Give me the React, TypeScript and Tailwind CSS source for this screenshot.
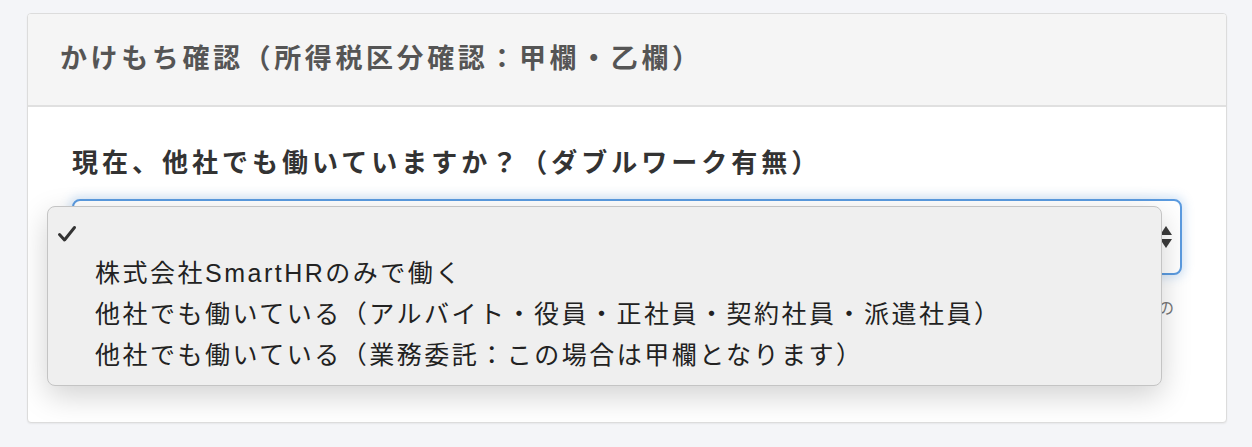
const font = {
  fontFamily: '"Liberation Sans", "Noto Sans CJK JP", sans-serif',
};

const options = [
  "株式会社SmartHRのみで働く",
  "他社でも働いている（アルバイト・役員・正社員・契約社員・派遣社員）",
  "他社でも働いている（業務委託：この場合は甲欄となります）",
];

function SelectArrows() {
  return (
    <svg width="16" height="26" viewBox="0 0 16 26" className="text-[#3c3c3c]">
      <path d="M8 2 L14 11 H2 Z" fill="currentColor" />
      <path d="M8 24 L14 15 H2 Z" fill="currentColor" />
    </svg>
  );
}

export default function App() {
  return (
    <div className="min-h-screen bg-[#f4f5f8] pt-[13px] pl-[27px]" style={font}>
      <div className="w-[1200px] h-[410px] rounded-[4px] border border-[#dcdcdc] bg-white shadow-[0_1px_2px_rgba(0,0,0,0.06)] overflow-hidden">
        <div className="h-[93px] bg-[#f5f5f5] border-b-2 border-[#e0e0e0] flex items-center px-[32px]">
          <h2 className="text-[27px] tracking-[3.6px] font-semibold text-[#555]">
            かけもち確認（所得税区分確認：甲欄・乙欄）
          </h2>
        </div>
        <div className="px-[44px] pt-[36px]">
          <label className="block h-[40px] leading-[40px] text-[26px] tracking-[4px] font-bold text-[#333]">
            現在、他社でも働いていますか？（ダブルワーク有無）
          </label>
          <div className="relative mt-4">
            <div className="h-[76px] rounded-[8px] border-2 border-[#5b9be0] shadow-[0_0_10px_3px_rgba(91,155,224,0.25)] bg-white flex items-center justify-end pr-[6px]">
              <SelectArrows />
            </div>
            <p className="mt-[22px] text-[16px] text-[#777] whitespace-nowrap text-right pr-[8px]">
              ※他社でも働いている場合は、主たる給与の支払者がどちらかをご確認の
            </p>

            {/* open option list, drawn over the select */}
            <div className="absolute left-[-25px] top-[7px] w-[1115px] h-[180px] rounded-[8px] border border-[#c4c4c4] bg-[#efefef] shadow-[0_10px_30px_rgba(0,0,0,0.18)] pt-[8px]">
              <div className="h-[38px] flex items-center pl-[9px]">
                <svg width="20" height="18" viewBox="0 0 20 18">
                  <path
                    d="M2.5 9.5 L7.5 15 L17.5 2.5"
                    fill="none"
                    stroke="#333"
                    strokeWidth="3"
                    strokeLinecap="round"
                    strokeLinejoin="round"
                  />
                </svg>
              </div>
              {options.map((o) => (
                <div
                  key={o}
                  className="h-[41px] leading-[41px] pl-[47px] text-[25px] tracking-[2.5px] text-[#222]"
                >
                  {o}
                </div>
              ))}
            </div>
          </div>
        </div>
      </div>
    </div>
  );
}
